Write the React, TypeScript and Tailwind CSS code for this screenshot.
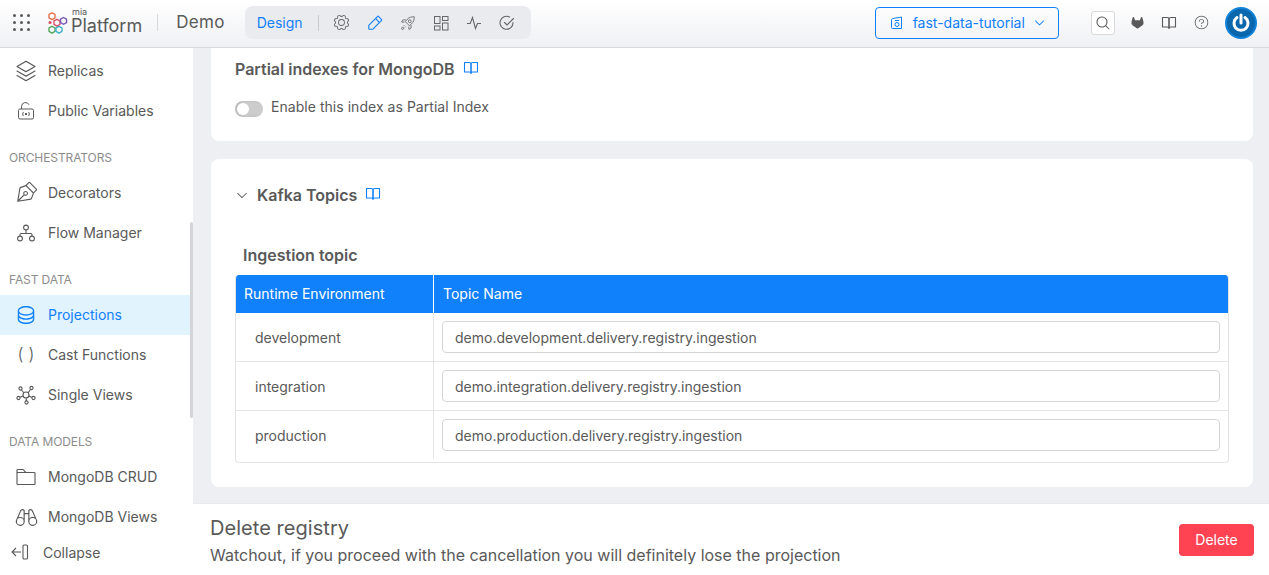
import React from "react";
import { PiStackLight, PiPenNibLight, PiDatabase, PiFolderLight, PiBinocularsLight, PiGearLight, PiPencilSimple, PiCaretDown, PiMagnifyingGlass, PiQuestionLight, PiGitlabLogoSimpleFill } from "react-icons/pi";

const Book = ({ className = "" }: { className?: string }) => (
  <svg viewBox="0 0 16 16" className={className} fill="none" stroke="currentColor" strokeWidth="1.1" strokeLinejoin="round" strokeLinecap="round">
    <path d="M1.5 2.5h4.6c1 0 1.9.5 1.9 1.5v9.2c0-.7-.8-1.2-1.8-1.2H1.5z" />
    <path d="M14.5 2.5H9.9C8.9 2.5 8 3 8 4v9.2c0-.7.8-1.2 1.8-1.2h4.7z" />
  </svg>
);

const Logo = () => (
  <svg viewBox="0 0 20 22" className="w-[20px] h-[22px]" fill="none" strokeWidth="1.4">
    <path d="M4 .8l3 1.700v3.400l-3 1.700-3-1.700V2.500z" stroke="#e8734a" />
    <path d="M9 7.300l3 1.700v3.400l-3 1.700-3-1.700V9z" stroke="#e0506a" />
    <path d="M15.500 5.500l3 1.700v3.400l-3 1.700-3-1.700V7.200z" stroke="#7a55b8" />
    <path d="M4 14.300l3 1.700v3.400l-3 1.700-3-1.700V16z" stroke="#56a860" />
    <path d="M11 14.300l3 1.700v3.400l-3 1.700-3-1.700V16z" stroke="#3fb4c8" />
    <circle cx="2" cy="10.500" r="1.500" fill="#d9485f" stroke="none" />
  </svg>
);

const Grip = () => (
  <div className="grid grid-cols-3 gap-[4px] w-[17px]">
    {Array.from({ length: 9 }).map((_, i) => (
      <span key={i} className="w-[3px] h-[3px] rounded-full bg-[#595959]" />
    ))}
  </div>
);

const Vars = () => (
  <svg viewBox="0 0 20 20" className="w-[20px] h-[20px]" fill="none" stroke="#595959" strokeWidth="1">
    <rect x="2.500" y="8" width="15" height="10" rx="1.500" />
    <path d="M5.500 8V5.500a4 4 0 0 1 7.600-1.700" />
    <path d="M7.500 11c-1 1-1 3 0 4M12.500 11c1 1 1 3 0 4M9 12l2 2M11 12l-2 2" />
  </svg>
);

const Flow = () => (
  <svg viewBox="0 0 20 20" className="w-[20px] h-[20px]" fill="none" stroke="#595959" strokeWidth="1.100">
    <circle cx="10" cy="4.500" r="2.400" />
    <circle cx="4" cy="15.500" r="2.400" />
    <circle cx="16" cy="15.500" r="2.400" />
    <path d="M10 7v3.500M4 13v-1.200c0-.7.500-1.300 1.300-1.300h9.400c.8 0 1.300.6 1.300 1.300V13" />
  </svg>
);

const Hub = () => (
  <svg viewBox="0 0 20 20" className="w-[20px] h-[20px]" fill="none" stroke="#595959" strokeWidth="1.100">
    <circle cx="10" cy="10" r="3" />
    <circle cx="4.500" cy="3.500" r="1.600" />
    <circle cx="15.500" cy="3" r="1.600" />
    <circle cx="2.500" cy="13" r="1.600" />
    <circle cx="10.500" cy="17.500" r="1.600" />
    <circle cx="17.500" cy="13" r="1.600" />
    <path d="M5.500 5l2.500 3M14.500 4.500L12 8M4 12.300l3.200-1.300M10.300 16v-3M16 12.500l-3.200-1.500" />
  </svg>
);

const Repo = () => (
  <svg viewBox="0 0 14 14" className="w-[14px] h-[14px]" fill="none" stroke="#1180fb" strokeWidth="1">
    <path d="M3 2.500l8.500-1.500v11.500H2.500a1 1 0 0 1-1-1V4c0-.8.600-1.300 1.500-1.500z" />
    <circle cx="7" cy="8.500" r="2" />
    <path d="M5 4.500h4" />
  </svg>
);

const Grid4 = () => (
  <svg viewBox="0 0 16 16" className="w-[16px] h-[16px]" fill="none" stroke="#666666" strokeWidth="1">
    <rect x="1.500" y="1.500" width="5.500" height="7" />
    <rect x="9.500" y="1.500" width="5.500" height="4" />
    <rect x="1.500" y="11" width="5.500" height="4" />
    <rect x="9.500" y="8" width="5.500" height="7" />
  </svg>
);

const Pulse = () => (
  <svg viewBox="0 0 16 16" className="w-[16px] h-[16px]" fill="none" stroke="#666666" strokeWidth="1.100">
    <path d="M1 8.500h3.200L6.500 2.500l3 11 2-5H15" />
  </svg>
);

const Rocket = () => (
  <svg viewBox="0 0 18 18" className="w-[18px] h-[18px]" fill="none" stroke="#666666" strokeWidth="1">
    <path d="M16 2c-3.200-.2-6 .8-8 3L6 7.500l4.500 4.500L13 10c2.200-2 3.200-4.800 3-8z" />
    <circle cx="11" cy="7" r="1.600" />
    <path d="M6.500 5.500C3.500 5 2 6 2 8l3 0M12.500 11.500c.5 3-.5 4.500-2.500 4.500l0-3" />
    <circle cx="3" cy="15" r="1.200" />
    <path d="M5 11.500l-1 1M6.500 13l-1 1" />
  </svg>
);

const CheckRound = () => (
  <svg viewBox="0 0 16 16" className="w-[16px] h-[16px]" fill="none" stroke="#666666" strokeWidth="1.100" strokeLinecap="round">
    <path d="M14 7.500A6.500 6.500 0 1 1 10.500 2" />
    <path d="M5.500 7.500L8 10l6.500-6.500" />
  </svg>
);

const Collapse = () => (
  <svg viewBox="0 0 18 18" className="w-[18px] h-[18px]" fill="none" stroke="#595959" strokeWidth="1.100">
    <path d="M1 9h9M5 5L1 9l4 4" />
    <rect x="12" y="2" width="4.500" height="14" rx="1" />
  </svg>
);

const Item = ({ icon, label, active }: { icon: React.ReactNode; label: string; active?: boolean }) => (
  <div className={`h-[40px] flex items-center pl-[16px] ${active ? "bg-[#e1f4fe] text-[#1180fb]" : "text-[#595959]"}`}>
    <span className="w-[20px] flex justify-center">{icon}</span>
    <span className="ml-[12px] text-[14px] pb-[2px] whitespace-nowrap">{label}</span>
  </div>
);

const Section = ({ label }: { label: string }) => (
  <div className="h-[42px] pt-[12px] flex items-center pl-[9px] text-[12px] tracking-[-0.1px] text-[#8c8c8c] whitespace-nowrap">{label}</div>
);

const Row = ({ env, value, last }: { env: string; value: string; last?: boolean }) => (
  <div className={`flex ${last ? "h-[51px] pb-[3px]" : "h-[49px] border-b border-[#e4e5e7]"}`}>
    <div className="w-[198px] flex items-center pl-[19px] text-[14px] text-[#595959] border-r border-[#e4e5e7]">{env}</div>
    <div className="flex-1 flex items-center px-[8px]">
      <div className="h-[32px] w-full border border-[#d4d5d8] rounded-[4px] flex items-center pl-[12px] text-[14px] text-[#595959]">{value}</div>
    </div>
  </div>
);

const NavIcon = ({ children, first }: { children: React.ReactNode; first?: boolean }) => (
  <span className={`${first ? "ml-[15px]" : "ml-[17px]"} w-[16px] flex justify-center`}>{children}</span>
);

export default function App() {
  return (
    <div className="w-[1269px] h-[575px] overflow-hidden flex flex-col bg-[#eeeff2] font-['Inter',sans-serif]">
      <header className="h-[48px] shrink-0 flex items-center pb-[2px] bg-gradient-to-b from-white to-[#f0f1f4] border-b border-[#d6d8dc]">
        <div className="ml-[13px]"><Grip /></div>
        <div className="ml-[18px] flex items-center">
          <Logo />
          <div className="relative ml-[3px] text-[18px] leading-none text-[#595959] pt-[7px]">
            Platform
            <span className="absolute left-[1px] top-[-3px] text-[9px] text-[#595959]">mia</span>
          </div>
        </div>
        <span className="ml-[15px] w-px h-[17px] bg-[#d9d9d9]" />
        <span className="ml-[18px] text-[17px] text-[#595959] tracking-[0.3px]">Demo</span>
        <nav className="ml-[20px] w-[286px] h-[33px] rounded-[8px] bg-[#eaebee] flex items-center pl-[12px]">
          <span className="text-[14px] text-[#1180fb]">Design</span>
          <span className="ml-[15px] w-px h-[16px] bg-[#c9cacd]" />
          <NavIcon first><PiGearLight size={19} color="#666666" className="shrink-0" /></NavIcon>
          <NavIcon><PiPencilSimple size={18} color="#1180fb" className="shrink-0" /></NavIcon>
          <NavIcon><Rocket /></NavIcon>
          <NavIcon><Grid4 /></NavIcon>
          <NavIcon><Pulse /></NavIcon>
          <NavIcon><CheckRound /></NavIcon>
        </nav>
        <div className="ml-[344px] w-[184px] h-[32px] rounded-[4px] border border-[#1180fb] flex items-center pl-[14px] text-[#1180fb]">
          <Repo />
          <span className="ml-[9px] text-[14px]">fast-data-tutorial</span>
          <PiCaretDown size={13} className="ml-[8px]" />
        </div>
        <div className="ml-[32px] w-[24px] h-[24px] rounded-[3px] bg-white border border-[#d9d9d9] flex items-center justify-center">
          <PiMagnifyingGlass size={16} color="#595959" />
        </div>
        <span className="ml-[15px]"><PiGitlabLogoSimpleFill size={15} color="#595959" /></span>
        <span className="ml-[16px]"><Book className="w-[16px] h-[16px] text-[#595959]" /></span>
        <span className="ml-[16px] flex"><PiQuestionLight size={17} color="#595959" /></span>
        <div className="ml-[15px] w-[32px] h-[32px] rounded-full bg-[#0a66ad] border-[2px] border-[#1182d8] flex items-center justify-center">
          <svg viewBox="0 0 20 20" className="w-[20px] h-[20px]" fill="none" stroke="white" strokeWidth="3" strokeLinecap="round">
            <path d="M6 4.500a7 7 0 1 0 8 0" />
            <path d="M10 2v8" />
          </svg>
        </div>
      </header>

      <div className="flex-1 flex min-h-0">
        <aside className="relative w-[193px] shrink-0 bg-white pt-[3px] overflow-hidden">
          <Item icon={<PiStackLight size={24} color="#595959" className="shrink-0" />} label="Replicas" />
          <Item icon={<Vars />} label="Public Variables" />
          <Section label="ORCHESTRATORS" />
          <Item icon={<PiPenNibLight size={24} color="#595959" className="shrink-0" />} label="Decorators" />
          <Item icon={<Flow />} label="Flow Manager" />
          <Section label="FAST DATA" />
          <Item active icon={<PiDatabase size={22} color="#1180fb" className="shrink-0" />} label="Projections" />
          <Item icon={<span className="text-[17px] text-[#595959] tracking-[5px] pl-[5px] font-light">()</span>} label="Cast Functions" />
          <Item icon={<Hub />} label="Single Views" />
          <Section label="DATA MODELS" />
          <Item icon={<PiFolderLight size={24} color="#595959" className="shrink-0" />} label="MongoDB CRUD" />
          <Item icon={<PiBinocularsLight size={25} color="#595959" className="shrink-0" />} label="MongoDB Views" />
          <div className="absolute left-0 bottom-0 w-full h-[40px] bg-white flex items-center pl-[11px] pb-[6px] text-[#595959]">
            <Collapse />
            <span className="ml-[14px] text-[14px]">Collapse</span>
          </div>
          <div className="absolute right-0 top-[174px] w-[3px] h-[196px] bg-[#d4d5d8] rounded-full" />
        </aside>

        <div className="flex-1 min-w-0 flex flex-col">
          <main className="flex-1 min-h-0 px-[18px] pr-[16px] flex flex-col gap-[18px]">
            <section className="h-[93px] shrink-0 bg-white rounded-b-[8px] pl-[24px]">
              <div className="flex items-center pt-[11px]">
                <span className="text-[16px] leading-[20px] font-semibold text-[#595959]">Partial indexes for MongoDB</span>
                <Book className="ml-[9px] w-[16px] h-[16px] text-[#1180fb] -mt-[3px]" />
              </div>
              <div className="mt-[17px] flex items-center">
                <span className="w-[28px] h-[16px] mt-[2px] rounded-full bg-[#cccccc] flex items-center pl-[2px] shadow-[inset_2px_0_3px_rgba(0,0,0,0.1)]">
                  <span className="w-[12px] h-[12px] rounded-full bg-white" />
                </span>
                <span className="ml-[8px] pb-[2px] text-[14px] text-[#595959] tracking-[0.04px]">Enable this index as Partial Index</span>
              </div>
            </section>
            <section className="h-[328px] shrink-0 bg-white rounded-[8px] pl-[24px] pr-[24px]">
              <div className="flex items-center pt-[26px] h-[46px]">
                <PiCaretDown size={14} color="#595959" />
                <span className="ml-[8px] text-[16px] font-semibold text-[#595959]">Kafka Topics</span>
                <Book className="ml-[8px] w-[16px] h-[16px] text-[#1180fb] -mt-[3px]" />
              </div>
              <h3 className="mt-[40px] ml-[8px] h-[20px] text-[16px] leading-[20px] font-semibold text-[#595959]">Ingestion topic</h3>
              <div className="mt-[10px] border-x border-b border-[#e4e5e7] rounded-[4px] overflow-hidden">
                <div className="h-[38px] bg-[#1180fb] flex text-white text-[14px]">
                  <div className="w-[198px] flex items-center pl-[8px] pb-[2px] border-r border-white">Runtime Environment</div>
                  <div className="flex-1 flex items-center pl-[9px] pb-[2px]">Topic Name</div>
                </div>
                <Row env="development" value="demo.development.delivery.registry.ingestion" />
                <Row env="integration" value="demo.integration.delivery.registry.ingestion" />
                <Row env="production" value="demo.production.delivery.registry.ingestion" last />
              </div>
            </section>
          </main>
          <footer className="h-[72px] shrink-0 bg-white flex items-center pl-[17px] pr-[15px] border-t border-[#e8e9eb]">
            <div className="flex-1 pt-[3px]">
              <div className="text-[20px] leading-[24px] text-[#595959] tracking-[0.05px]">Delete registry</div>
              <div className="mt-[4px] text-[16px] leading-[22px] text-[#595959]">Watchout, if you proceed with the cancellation you will definitely lose the projection</div>
            </div>
            <button className="w-[75px] h-[32px] rounded-[4px] bg-[#ff4352] text-white text-[14px]">Delete</button>
          </footer>
        </div>
      </div>
    </div>
  );
}
